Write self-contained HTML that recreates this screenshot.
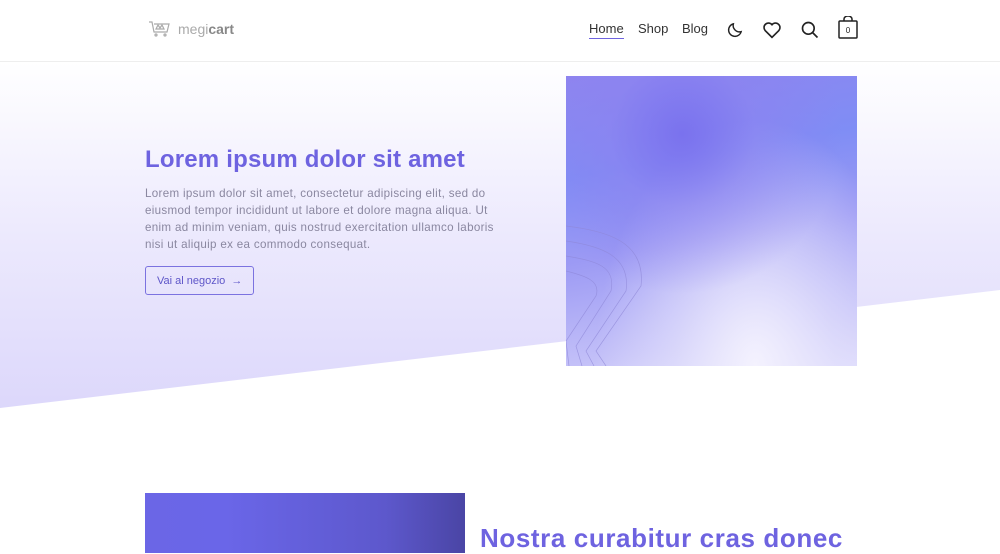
<!DOCTYPE html>
<html><head><meta charset="utf-8"><style>
*{margin:0;padding:0;box-sizing:border-box}
body{width:1000px;height:552px;overflow:hidden;background:#fff;font-family:"Liberation Sans",sans-serif;position:relative}
.hdr{position:absolute;left:0;top:0;width:1000px;height:62px;border-bottom:1px solid #eee;background:#fff}
.logo{position:absolute;left:148px;top:20px;font-size:14px;color:#aaa;display:flex;align-items:center;gap:6px}
.logo b{color:#888}
.nav{position:absolute;top:21px;font-size:13px;color:#333}
.hero{position:absolute;left:0;top:62px;width:1000px;height:350px;background:linear-gradient(#fff 0%,#ece9fd 50%,#dcd7fb 100%);clip-path:polygon(0 0,1000px 0,1000px 228px,0 346px)}
h1{position:absolute;left:145px;top:146px;font-size:24px;color:#6e63e0;font-weight:bold;letter-spacing:.2px}
p.t{position:absolute;left:145px;top:185px;width:366px;font-size:11.6px;line-height:17px;color:#8a87a0;letter-spacing:.32px}
.btn{position:absolute;left:145px;top:266px;width:109px;height:29px;border:1px solid #7b72e0;border-radius:3px;font-size:11px;color:#5e56c8;padding:8px 0 0 11px}
.img{position:absolute;left:566px;top:76px;width:291px;height:290px;background:radial-gradient(circle at 40% 20%,#7a72ee 0%,rgba(140,130,240,.6) 25%,rgba(160,150,245,0) 55%),radial-gradient(ellipse at 65% 100%,#f4f2fe 0%,rgba(230,228,252,.6) 30%,rgba(200,195,250,0) 60%),linear-gradient(170deg,#8f85ef 0%,#7f8df5 30%,#9c9af4 55%,#c3c0f8 85%,#dcd9fb)}
.img2{position:absolute;left:145px;top:493px;width:320px;height:60px;background:linear-gradient(90deg,#6b66e6 0%,#6a66e8 25%,#5d58cc 75%,#4a45a5 100%)}
h2{position:absolute;left:480px;top:523px;font-size:26px;color:#6e63e0;font-weight:bold;letter-spacing:.6px}
</style></head><body>
<div class="hdr">
<div class="logo"><svg width="24" height="18" viewBox="0 0 24 18" fill="none" stroke="#aaa" stroke-width="1.2"><path d="M1 2h3l2 10h13l2-8H6"/><path d="M8 9l2-4 2 3 2-3 2 4z"/><circle cx="8" cy="15" r="1"/><circle cx="17" cy="15" r="1"/></svg><span>megi<b>cart</b></span></div>
<div class="nav" style="left:589px;border-bottom:1px solid #6e63e0;padding-bottom:2px">Home</div>
<div class="nav" style="left:638px">Shop</div>
<div class="nav" style="left:682px">Blog</div>
<svg style="position:absolute;left:727px;top:21px" width="17" height="17" viewBox="0 0 24 24" fill="none" stroke="#222" stroke-width="2"><path d="M20 15A9 9 0 0 1 9 4a9 9 0 1 0 11 11z"/></svg>
<svg style="position:absolute;left:762px;top:21px" width="20" height="18" viewBox="0 0 24 22" fill="none" stroke="#222" stroke-width="2"><path d="M12 20l-8.5-8.5a5 5 0 0 1 8.5-7a5 5 0 0 1 8.5 7z"/></svg>
<svg style="position:absolute;left:800px;top:20px" width="20" height="20" viewBox="0 0 24 24" fill="none" stroke="#222" stroke-width="2"><circle cx="10" cy="10" r="7"/><path d="M15 15l6 6"/></svg>
<svg style="position:absolute;left:838px;top:16px" width="20" height="23" viewBox="0 0 20 23" fill="none" stroke="#222" stroke-width="1.5"><rect x="1" y="5" width="18" height="17" rx="1"/><path d="M6 5V3a4 3 0 0 1 8 0v2"/><text x="10" y="17" font-size="8" text-anchor="middle" fill="#222" stroke="none" font-family="Liberation Sans">0</text></svg>
</div>
<div class="hero"></div>
<h1>Lorem ipsum dolor sit amet</h1>
<p class="t">Lorem ipsum dolor sit amet, consectetur adipiscing elit, sed do eiusmod tempor incididunt ut labore et dolore magna aliqua. Ut enim ad minim veniam, quis nostrud exercitation ullamco laboris nisi ut aliquip ex ea commodo consequat.</p>
<div class="btn">Vai al negozio &nbsp;→</div>
<div class="img"><svg width="291" height="290" style="position:absolute;left:0;top:0" fill="none" stroke="#8f88d8" stroke-width=".7" opacity=".7"><path d="M0 150c40 5 80 15 75 60l-45 65 10 15"/><path d="M0 165c35 5 65 15 60 50l-40 60 8 15"/><path d="M0 180c30 5 50 10 45 35l-35 55 6 20"/><path d="M0 195c20 5 35 10 30 25l-30 45 3 25"/></svg></div>
<div class="img2"></div>
<h2>Nostra curabitur cras donec</h2>
</body></html>
